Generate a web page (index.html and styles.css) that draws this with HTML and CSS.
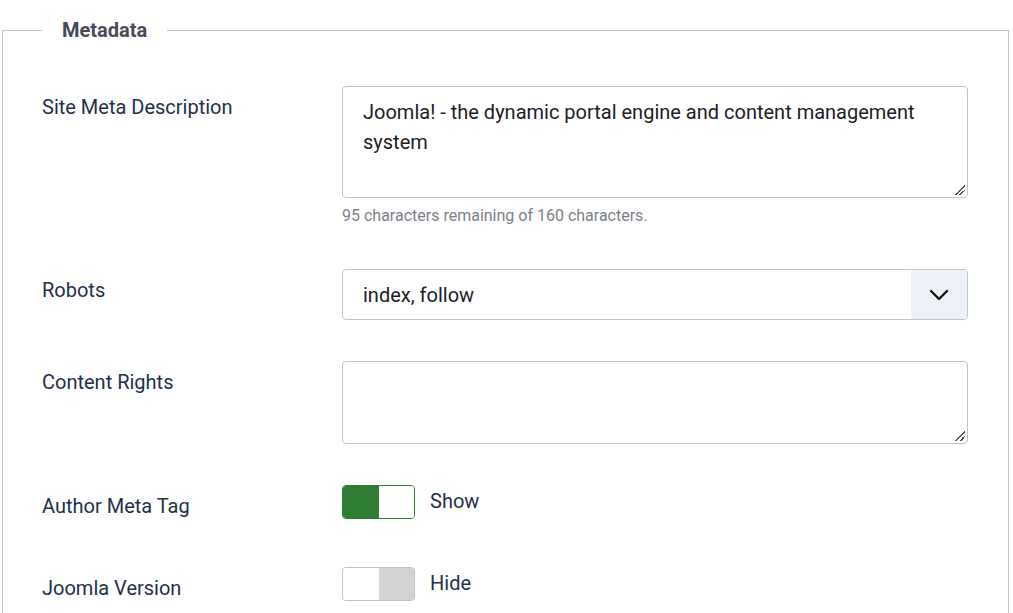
FILE: index.html
```html
<!DOCTYPE html>
<html lang="en">
<head>
<meta charset="utf-8">
<title>Metadata</title>
<link rel="stylesheet" href="styles.css">
</head>
<body>
<fieldset class="options">
  <legend class="options-legend">Metadata</legend>

  <div class="group">
    <div class="label">Site Meta Description</div>
    <div class="control">
      <div class="textarea tall">Joomla! - the dynamic portal engine and content management system<span class="grip"></span></div>
      <div class="hint">95 characters remaining of 160 characters.</div>
    </div>
  </div>

  <div class="group">
    <div class="label">Robots</div>
    <div class="control">
      <div class="select">
        <span class="select-value">index, follow</span>
        <span class="select-btn">
          <svg width="20" height="12" viewBox="0 0 20 12"><path d="M2 2 L10 10 L18 2" fill="none" stroke="#111" stroke-width="2.4" stroke-linecap="round" stroke-linejoin="round"/></svg>
        </span>
      </div>
    </div>
  </div>

  <div class="group">
    <div class="label">Content Rights</div>
    <div class="control">
      <div class="textarea short"><span class="grip"></span></div>
    </div>
  </div>

  <div class="group switch-group">
    <div class="label">Author Meta Tag</div>
    <div class="control switch-row">
      <span class="switch on"><span class="half left"></span><span class="half right"></span></span>
      <span class="switch-text">Show</span>
    </div>
  </div>

  <div class="group switch-group">
    <div class="label">Joomla Version</div>
    <div class="control switch-row">
      <span class="switch off"><span class="half left"></span><span class="half right"></span></span>
      <span class="switch-text">Hide</span>
    </div>
  </div>
</fieldset>
</body>
</html>
```

FILE: styles.css
```css
html, body {
  margin: 0;
  padding: 0;
  background: #fff;
  font-family: Roboto, "Liberation Sans", sans-serif;
  color: #22304a;
  overflow: hidden;
}
.options {
  margin: 15px 4px 0 2px;
  padding: 41px 40px 0 39px;
  border: 1px solid #b8c3cf;
  border-bottom: 0;
  border-radius: 0;
  min-width: 0;
}
.options-legend {
  padding: 0 20px;
  font-size: 20px;
  font-weight: 700;
  line-height: 30px;
  color: #464b55;
}
.group {
  display: flex;
  margin-bottom: 41px;
}
.label {
  width: 300px;
  flex: none;
  padding-top: 6px;
  font-size: 20px;
  line-height: 30px;
}
.control {
  flex: 1;
}
.textarea {
  position: relative;
  box-sizing: border-box;
  border: 1px solid #bcc4ce;
  border-radius: 4px;
  padding: 10px 20px;
  font-size: 20px;
  line-height: 30px;
  color: #1d2026;
}
.textarea.tall { height: 112px; }
.textarea.short { height: 83px; }
.grip {
  position: absolute;
  right: 2px;
  bottom: 2px;
  width: 10px;
  height: 10px;
  background:
    linear-gradient(135deg, transparent 46%, #555 46%, #555 56%, transparent 56%, transparent 70%, #555 70%, #555 80%, transparent 80%);
}
.hint {
  margin-top: 6px;
  font-size: 16px;
  line-height: 24px;
  color: #7c8189;
}
.select {
  display: flex;
  box-sizing: border-box;
  height: 51px;
  border: 1px solid #bcc4ce;
  border-radius: 4px;
  overflow: hidden;
}
.select-value {
  flex: 1;
  padding-left: 20px;
  font-size: 20px;
  line-height: 50px;
  color: #1d2026;
}
.select-btn {
  width: 56px;
  background: #eef2f8;
  display: flex;
  align-items: center;
  justify-content: center;
}
.switch-group { margin-bottom: 46px; }
.switch-group:last-child { margin-bottom: 0; padding-bottom: 12px; }
.switch-row {
  display: flex;
  align-items: center;
  height: 34px;
  gap: 15px;
}
.switch {
  display: flex;
  box-sizing: border-box;
  width: 73px;
  height: 34px;
  border: 1px solid #bcc4ce;
  border-radius: 4px;
  overflow: hidden;
}
.half { flex: 1; }
.switch.on { border-color: #2f7d32; }
.switch.on .left { background: #2f7d32; }
.switch.on .right { background: #fff; }
.switch.off .left { background: #fff; }
.switch.off .right { background: #d3d3d3; }
.switch-text {
  font-size: 20px;
  line-height: 30px;
  color: #22304a;
  margin-top: -2px;
}
```
